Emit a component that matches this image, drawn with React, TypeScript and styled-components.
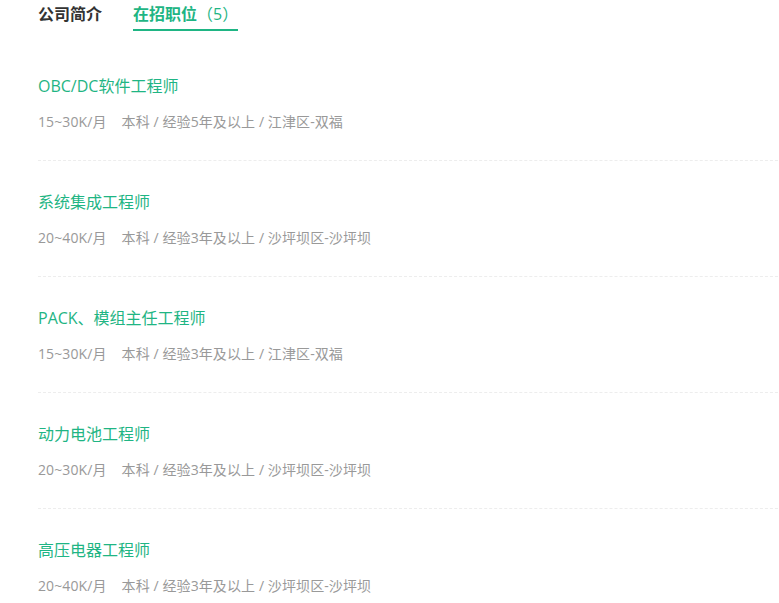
import styled, { createGlobalStyle } from 'styled-components';

const GlobalStyle = createGlobalStyle`
  html, body {
    margin: 0;
    padding: 0;
    background: #ffffff;
  }
  body {
    font-family: "Open Sans", "Noto Sans CJK SC", sans-serif;
  }
`;

interface Job {
  title: string;
  salary: string;
  detail: string;
}

const jobs: Job[] = [
  { title: 'OBC/DC软件工程师', salary: '15~30K/月', detail: '本科 / 经验5年及以上 / 江津区-双福' },
  { title: '系统集成工程师', salary: '20~40K/月', detail: '本科 / 经验3年及以上 / 沙坪坝区-沙坪坝' },
  { title: 'PACK、模组主任工程师', salary: '15~30K/月', detail: '本科 / 经验3年及以上 / 江津区-双福' },
  { title: '动力电池工程师', salary: '20~30K/月', detail: '本科 / 经验3年及以上 / 沙坪坝区-沙坪坝' },
  { title: '高压电器工程师', salary: '20~40K/月', detail: '本科 / 经验3年及以上 / 沙坪坝区-沙坪坝' },
];

export default function App() {
  return (
    <Page>
      <GlobalStyle />
      <Tabs>
        <Tab>公司简介</Tab>
        <Tab active>
          在招职位<Count>（5）</Count>
        </Tab>
      </Tabs>
      <JobList>
        {jobs.map((job) => (
          <JobRow key={job.title}>
            <JobTitle>{job.title}</JobTitle>
            <JobMeta>
              <Salary>{job.salary}</Salary>
              <span>{job.detail}</span>
            </JobMeta>
          </JobRow>
        ))}
      </JobList>
    </Page>
  );
}

interface TabProps {
  active?: boolean;
}

const Page = styled.div`
  padding-left: 38px;
  overflow: hidden;
`;

const Tabs = styled.div`
  display: flex;
  gap: 31px;
  padding-top: 3px;
`;

const Tab = styled.div<TabProps>`
  font-size: 16px;
  line-height: 22px;
  font-weight: 700;
  padding-bottom: 4px;
  color: ${({ active }) => (active ? '#1fb584' : '#333333')};
  border-bottom: 2px solid ${({ active }) => (active ? '#1fb584' : 'transparent')};
  cursor: pointer;
`;

const Count = styled.span`
  font-weight: 400;
`;

const JobList = styled.ul`
  list-style: none;
  margin: 14px 0 0;
  padding: 0;
  width: 760px;
`;

const JobRow = styled.li`
  padding: 30px 0 28px;
  border-bottom: 1px dashed #ededed;
`;

const JobTitle = styled.div`
  font-size: 16px;
  line-height: 22px;
  color: #1fb584;
  margin-bottom: 15px;
  cursor: pointer;
`;

const JobMeta = styled.div`
  font-size: 14px;
  line-height: 20px;
  letter-spacing: 0.1px;
  color: #999999;
`;

const Salary = styled.span`
  margin-right: 15px;
`;
